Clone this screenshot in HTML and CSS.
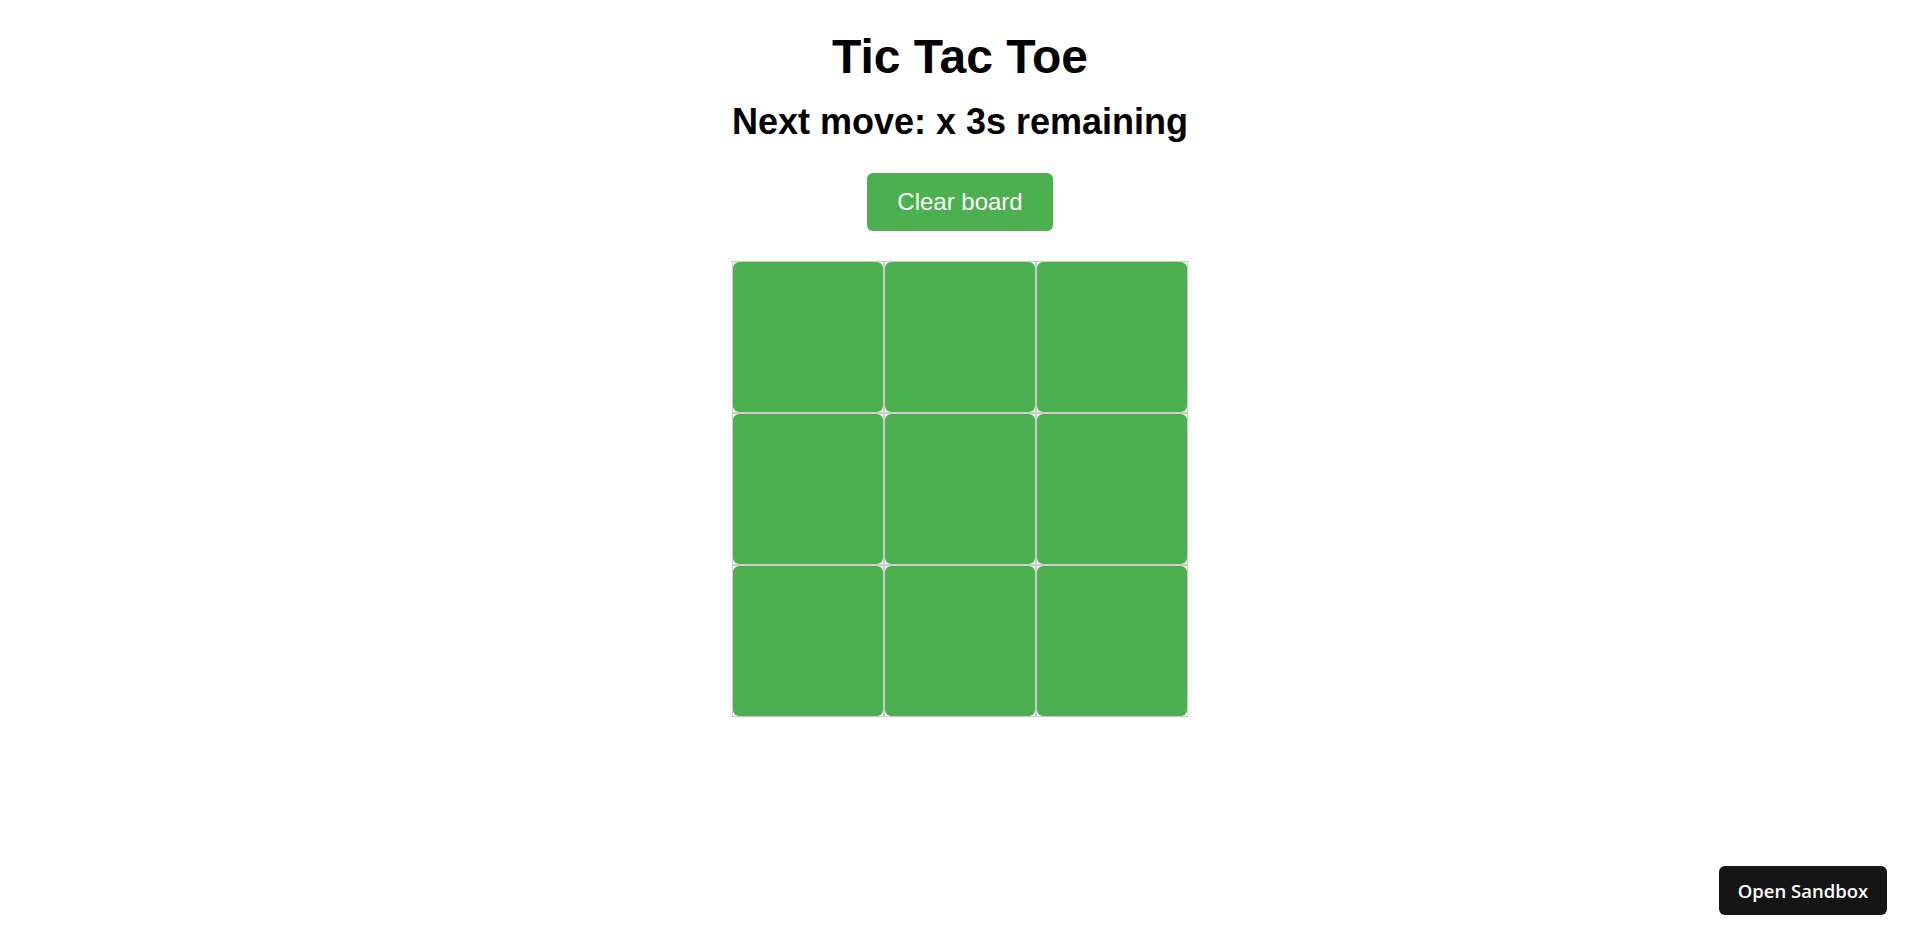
FILE: index.html
```html
<!DOCTYPE html>
<html lang="en">
<head>
<meta charset="utf-8">
<title>Tic Tac Toe</title>
<link rel="stylesheet" href="styles.css">
</head>
<body>
<div class="app">
  <h1 class="title">Tic Tac Toe</h1>
  <h2 class="status">Next move: x 3s remaining</h2>
  <button class="clear">Clear board</button>
  <div class="board">
    <div class="square"><button class="cell"></button></div>
    <div class="square"><button class="cell"></button></div>
    <div class="square"><button class="cell"></button></div>
    <div class="square"><button class="cell"></button></div>
    <div class="square"><button class="cell"></button></div>
    <div class="square"><button class="cell"></button></div>
    <div class="square"><button class="cell"></button></div>
    <div class="square"><button class="cell"></button></div>
    <div class="square"><button class="cell"></button></div>
  </div>
</div>
<a class="sandbox">Open Sandbox</a>
</body>
</html>
```
FILE: styles.css
```css
html, body {
  margin: 0;
  padding: 0;
  background: #fff;
}
body {
  font-family: "Liberation Sans", Arial, sans-serif;
  color: #000;
}
.app {
  display: flex;
  flex-direction: column;
  align-items: center;
  padding-top: 29px;
}
.title {
  margin: 0;
  font-size: 48px;
  line-height: 56px;
  font-weight: bold;
}
.status {
  margin: 16px 0 0;
  font-size: 36px;
  line-height: 42px;
  font-weight: bold;
}
.clear {
  margin-top: 30px;
  font-family: "Liberation Sans", Arial, sans-serif;
  font-size: 24px;
  line-height: 28px;
  padding: 15px 30px;
  background: #4caf50;
  color: #fff;
  border: none;
  border-radius: 6px;
}
.board {
  margin-top: 30px;
  display: grid;
  grid-template-columns: repeat(3, 152px);
  grid-template-rows: repeat(3, 152px);
}
.square {
  border: 1px solid #ccc;
  display: flex;
}
.cell {
  flex: 1;
  margin: 0;
  padding: 0;
  border: none;
  background: #4caf50;
  border-radius: 6px;
}
.sandbox {
  position: fixed;
  right: 33px;
  bottom: 29px;
  width: 168px;
  height: 49px;
  display: flex;
  align-items: center;
  justify-content: center;
  box-sizing: border-box;
  background: #151515;
  color: #fff;
  border-radius: 6px;
  font-family: "Open Sans", sans-serif;
  font-weight: 600;
  font-size: 18.5px;
}
```
